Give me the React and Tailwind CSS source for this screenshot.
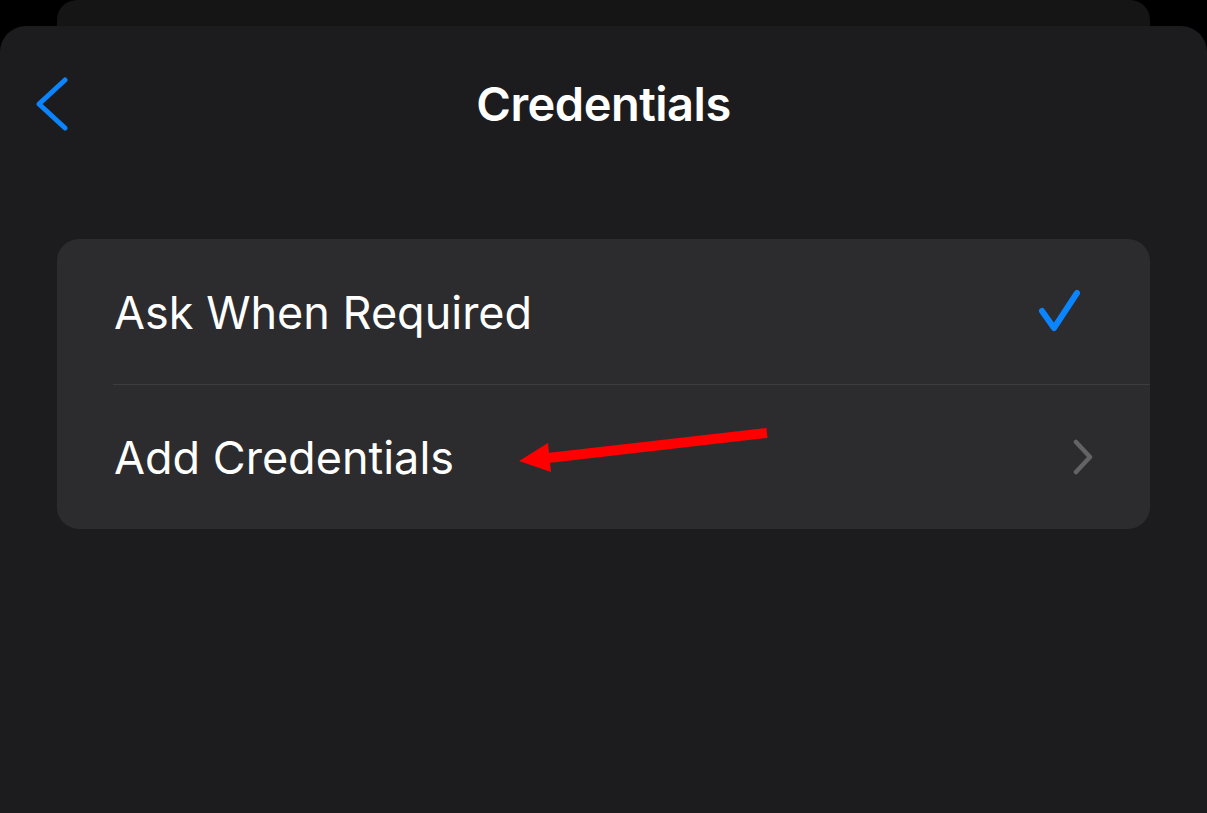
import React from 'react';

const font = { fontFamily: 'Inter, "Noto Sans", sans-serif' };

const BackChevron = () => (
    <svg width="34" height="54" viewBox="0 0 34 54" fill="none">
        <path d="M29 3 L3 27 L29 51" stroke="#0a84ff" strokeWidth="5" strokeLinecap="round" strokeLinejoin="round" />
    </svg>
);

const Check = () => (
    <svg width="44" height="46" viewBox="0 0 44 46" fill="none">
        <path d="M4 22 L16 39 L39 4" stroke="#0a84ff" strokeWidth="6" strokeLinecap="round" strokeLinejoin="round" />
    </svg>
);

const ChevronRight = () => (
    <svg width="22" height="36" viewBox="0 0 22 36" fill="none">
        <path d="M4 3 L18 18 L4 33" stroke="#636366" strokeWidth="4.5" strokeLinecap="round" strokeLinejoin="round" />
    </svg>
);

// red annotation arrow drawn over the card
const RedArrow = () => (
    <svg className="absolute left-[510px] top-[425px]" width="265" height="55" viewBox="0 0 265 55" fill="none">
        <path d="M257 8 L38 33" stroke="#ff0000" strokeWidth="10" />
        <path d="M9 36 L38 18 L41 47 Z" fill="#ff0000" />
    </svg>
);

export default function App() {
    return (
        <div className="relative w-[1207px] h-[813px] bg-black flex flex-col overflow-hidden" style={font}>
            {/* sheet behind */}
            <div className="mx-[57px] h-[26px] shrink-0 bg-[#151515] rounded-t-[20px]" />

            {/* front sheet */}
            <div className="flex-1 bg-[#1c1c1e] rounded-t-[26px] flex flex-col">
                <div className="h-[156px] grid grid-cols-[1fr_auto_1fr] items-center">
                    <div className="pl-[36px] flex items-center">
                        <BackChevron />
                    </div>
                    <h1 className="text-white text-[47px] font-semibold tracking-[-0.5px]">Credentials</h1>
                    <div />
                </div>

                <div className="mt-[57px] mx-[57px] bg-[#2c2c2e] rounded-[22px] flex flex-col">
                    <div className="h-[145px] pl-[57px] pr-[68px] flex items-center justify-between">
                        <span className="text-white text-[45px] pt-[2px]">Ask When Required</span>
                        <Check />
                    </div>
                    <div className="ml-[56px] border-b border-[#3d3d40]" />
                    <div className="h-[144px] pl-[57px] pr-[56px] flex items-center justify-between">
                        <span className="text-white text-[45px] pt-[2px]">Add Credentials</span>
                        <ChevronRight />
                    </div>
                </div>
            </div>

            <RedArrow />
        </div>
    );
}
